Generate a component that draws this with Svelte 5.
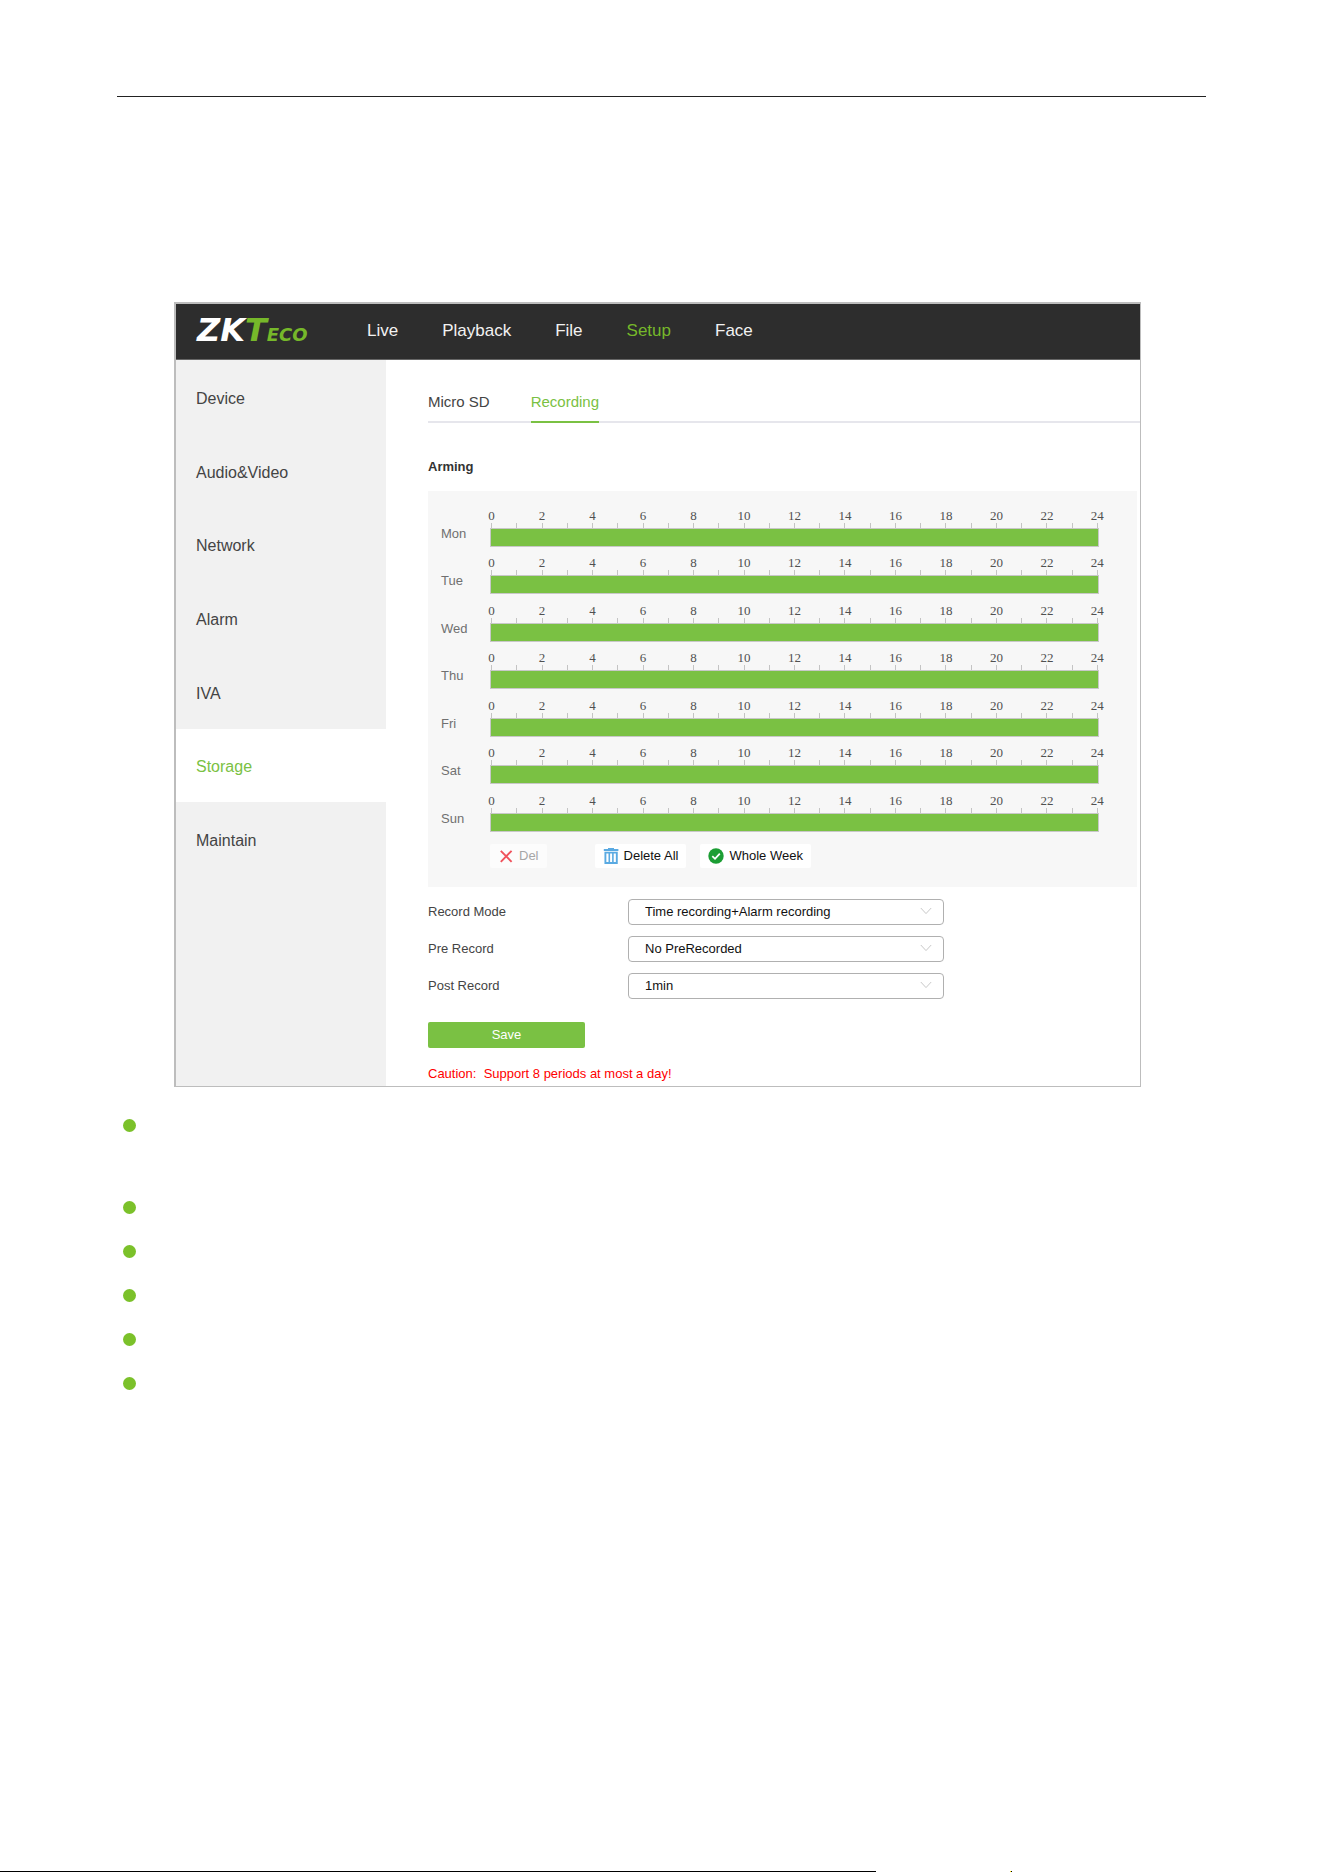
<script lang="ts">
  type Field = { id: string; label: string; options: string[] }

  const navItems = ['Live', 'Playback', 'File', 'Setup', 'Face']
  const sideItems = ['Device', 'Audio&Video', 'Network', 'Alarm', 'IVA', 'Storage', 'Maintain']
  const tabs = ['Micro SD', 'Recording']
  const days = ['Mon', 'Tue', 'Wed', 'Thu', 'Fri', 'Sat', 'Sun']
  const hours = Array.from({ length: 25 }, (_, i) => i)

  const fields: Field[] = [
    { id: 'record-mode', label: 'Record Mode', options: ['Time recording+Alarm recording'] },
    { id: 'pre-record', label: 'Pre Record', options: ['No PreRecorded'] },
    { id: 'post-record', label: 'Post Record', options: ['1min'] }
  ]

  let activeNav = $state('Setup')
  let activeSide = $state('Storage')
  let activeTab = $state('Recording')
</script>

<div class="page">
  <hr class="rule" />

  <div class="window">
    <header>
      <div class="logo"><span class="zk">ZK</span><span class="t">T</span><span class="eco">ECO</span></div>
      <nav class="top-nav">
        {#each navItems as item}
          <a href="#{item}" class:active={item === activeNav} onclick={() => (activeNav = item)}>{item}</a>
        {/each}
      </nav>
    </header>

    <div class="body">
      <nav class="sidebar">
        <div class="side-items">
          {#each sideItems as item}
            <a href="#{item}" class:active={item === activeSide} onclick={() => (activeSide = item)}>{item}</a>
          {/each}
        </div>
      </nav>

      <main>
        <div class="tabs">
          {#each tabs as tab}
            <button class="tab" class:active={tab === activeTab} onclick={() => (activeTab = tab)}>{tab}</button>
          {/each}
        </div>

        <h2>Arming</h2>

        <section class="arming">
          <div class="schedule">
            {#each days as day}
              <div class="day">
                <span class="day-name">{day}</span>
                <div class="track">
                  <div class="hours">
                    {#each hours as hour}
                      <span class="hour">{hour % 2 === 0 ? hour : ''}</span>
                    {/each}
                  </div>
                  <div class="bar"></div>
                </div>
              </div>
            {/each}
          </div>

          <div class="actions">
            <button class="action del" disabled>
              <svg width="16" height="16" viewBox="0 0 16 16" fill="none" stroke="#f0525c" stroke-width="1.9">
                <path d="M2.8 2.8 L13.6 13.8 M13.6 2.8 L2.8 13.8" />
              </svg>
              Del
            </button>
            <button class="action">
              <svg width="16" height="16" viewBox="0 0 16 16" fill="none" stroke="#5aaae2">
                <path d="M0.8 2 H15.4" stroke-width="2" />
                <path d="M5 0.6 H11" stroke-width="1.2" />
                <path d="M2.4 4.6 V15 H13.8 V4.6 Z" stroke-width="1.9" />
                <path d="M6.3 4.6 V15 M9.9 4.6 V15" stroke-width="1.6" />
              </svg>
              Delete All
            </button>
            <button class="action">
              <svg width="16" height="16" viewBox="0 0 16 16" fill="none">
                <circle cx="8" cy="8" r="7.7" fill="#1c9e34" />
                <path d="M4.3 8.2 L7 10.8 L11.8 5.7" stroke="#fff" stroke-width="1.8" />
              </svg>
              Whole Week
            </button>
          </div>
        </section>

        <form onsubmit={(e) => e.preventDefault()}>
          {#each fields as field}
            <div class="field">
              <label for={field.id}>{field.label}</label>
              <div class="select">
                <select id={field.id}>
                  {#each field.options as option}
                    <option>{option}</option>
                  {/each}
                </select>
                <svg width="12" height="8" viewBox="0 0 12 8" fill="none" stroke="#c8c8c8">
                  <path d="M0.8 1 L6 6.6 L11.2 1" />
                </svg>
              </div>
            </div>
          {/each}
          <button class="save" type="submit">Save</button>
        </form>

        <p class="caution">Caution:&nbsp; Support 8 periods at most a day!</p>
      </main>
    </div>
  </div>

  <ul class="notes">
    {#each [1, 2, 3, 4, 5, 6] as note (note)}
      <li></li>
    {/each}
  </ul>

  <div class="foot"><span class="foot-line"></span><span class="foot-mark"></span></div>
</div>

<style>
  :global(body) {
    margin: 0;
    background: #fff;
  }

  .page {
    display: flex;
    flex-direction: column;
    min-height: 100vh;
    font-family: 'Liberation Sans', Arial, sans-serif;
    font-size: 13px;
    line-height: 16px;
    color: #444;
  }

  .rule {
    height: 1px;
    margin: 96px 118px 205px 117px;
    border: 0;
    background: #222;
  }

  .window {
    margin: 0 183px 0 174px;
    border: solid #bdbdbd;
    border-width: 2px 1px 1px 2px;
  }

  header {
    display: flex;
    align-items: center;
    height: 55px;
    padding-left: 21px;
    background: #2d2d2d;
    border-bottom: 1px solid #666;
  }

  .logo {
    width: 170px;
    padding-top: 2px;
    font-family: 'DejaVu Sans', sans-serif;
    font-size: 32px;
    font-style: italic;
    font-weight: 700;
    line-height: 32px;
    white-space: nowrap;
  }

  .zk {
    color: #fff;
  }

  .t,
  .eco {
    color: #76b82a;
  }

  .eco {
    font-size: 18px;
  }

  .top-nav {
    display: flex;
    gap: 44px;
    padding-bottom: 2px;
    font-size: 17px;
  }

  .top-nav a {
    color: #f2f2f2;
    text-decoration: none;
  }

  .top-nav a.active {
    color: #76b82a;
  }

  .body {
    display: flex;
  }

  .sidebar {
    flex: 0 0 210px;
    background: #f1f1f1;
  }

  .side-items {
    display: grid;
    grid-template-rows: repeat(7, 1fr);
    min-height: 516px;
  }

  .sidebar a {
    display: flex;
    align-items: center;
    padding: 4px 0 0 20px;
    color: #444;
    font-size: 16px;
    text-decoration: none;
  }

  .sidebar a.active {
    background: #fff;
    color: #7ac143;
  }

  main {
    flex: 1;
    min-width: 0;
    padding: 34px 0 4px 42px;
  }

  .tabs {
    display: flex;
    gap: 41px;
    border-bottom: 2px solid #e6e6ec;
  }

  button {
    border: 0;
    background: none;
    font: inherit;
  }

  .tab {
    margin-bottom: -2px;
    padding: 0 0 11px;
    border-bottom: 2px solid transparent;
    color: #444;
    font-size: 15px;
  }

  .tab.active {
    border-color: #7ac143;
    color: #7ac143;
  }

  h2 {
    margin: 36px 0 16px;
    color: #333;
    font-size: 13px;
    font-weight: 700;
  }

  .arming {
    margin-right: 3px;
    padding: 17px 27px 19px 13px;
    background: #f7f7f7;
  }

  .schedule {
    display: grid;
    grid-template-rows: repeat(7, 1fr);
    min-height: 332px;
  }

  .day {
    display: flex;
  }

  .day-name {
    width: 38px;
    margin-top: 18px;
    color: #707070;
  }

  .track {
    flex: 1;
  }

  /* 25 equal cells, so each hour mark is centred in its own cell */
  .hours {
    display: grid;
    grid-template-columns: repeat(25, 1fr);
    color: #505050;
    font-family: 'Liberation Serif', serif;
    line-height: 15px;
    text-align: center;
  }

  .hour {
    display: flex;
    flex-direction: column;
    align-items: center;
    justify-content: flex-end;
    min-height: 20px;
  }

  .hour::after {
    content: '';
    width: 1px;
    height: 5px;
    background: #c4c4c4;
  }

  .bar {
    height: 17px;
    margin: 0 11px;
    border: 1px solid #c8c8c8;
    background: #7ac143;
  }

  .actions {
    display: flex;
    gap: 14px;
    margin: 4px 0 0 49px;
  }

  .action {
    display: flex;
    align-items: center;
    gap: 5px;
    height: 24px;
    padding: 0 8px;
    border-radius: 2px;
    background: #fff;
    color: #111;
    white-space: nowrap;
  }

  .action.del {
    margin-right: 34px;
    background: #fcfcfc;
    color: #a6a6a6;
  }

  form {
    display: flex;
    flex-direction: column;
    gap: 11px;
    margin-top: 12px;
  }

  .field {
    display: grid;
    grid-template-columns: 200px minmax(0, 316px);
    align-items: center;
  }

  .select {
    position: relative;
  }

  select {
    display: block;
    width: 100%;
    height: 26px;
    padding: 0 36px 0 16px;
    border: 1px solid #b0b0b0;
    border-radius: 4px;
    appearance: none;
    background: #fff;
    color: #111;
    font: inherit;
  }

  .select svg {
    position: absolute;
    top: 8px;
    right: 12px;
    pointer-events: none;
  }

  .save {
    width: 157px;
    height: 26px;
    margin-top: 12px;
    border-radius: 2px;
    background: #7ac143;
    color: #fff;
  }

  .caution {
    margin: 18px 0 0;
    color: #f00;
  }

  .notes {
    display: grid;
    gap: 31px;
    margin: 32px 0 0 123px;
    padding: 0;
    list-style: none;
  }

  .notes li {
    width: 13px;
    height: 13px;
    border-radius: 50%;
    background: #7bc12a;
  }

  .notes li:first-child {
    margin-bottom: 38px;
  }

  .foot {
    display: flex;
    gap: 134px;
    height: 1px;
    margin-top: auto;
  }

  .foot-line {
    flex: 0 0 66.2%;
    background: #000;
  }

  .foot-mark {
    width: 1px;
    border-left: 1px solid #ffe600;
    background: #000;
  }
</style>
